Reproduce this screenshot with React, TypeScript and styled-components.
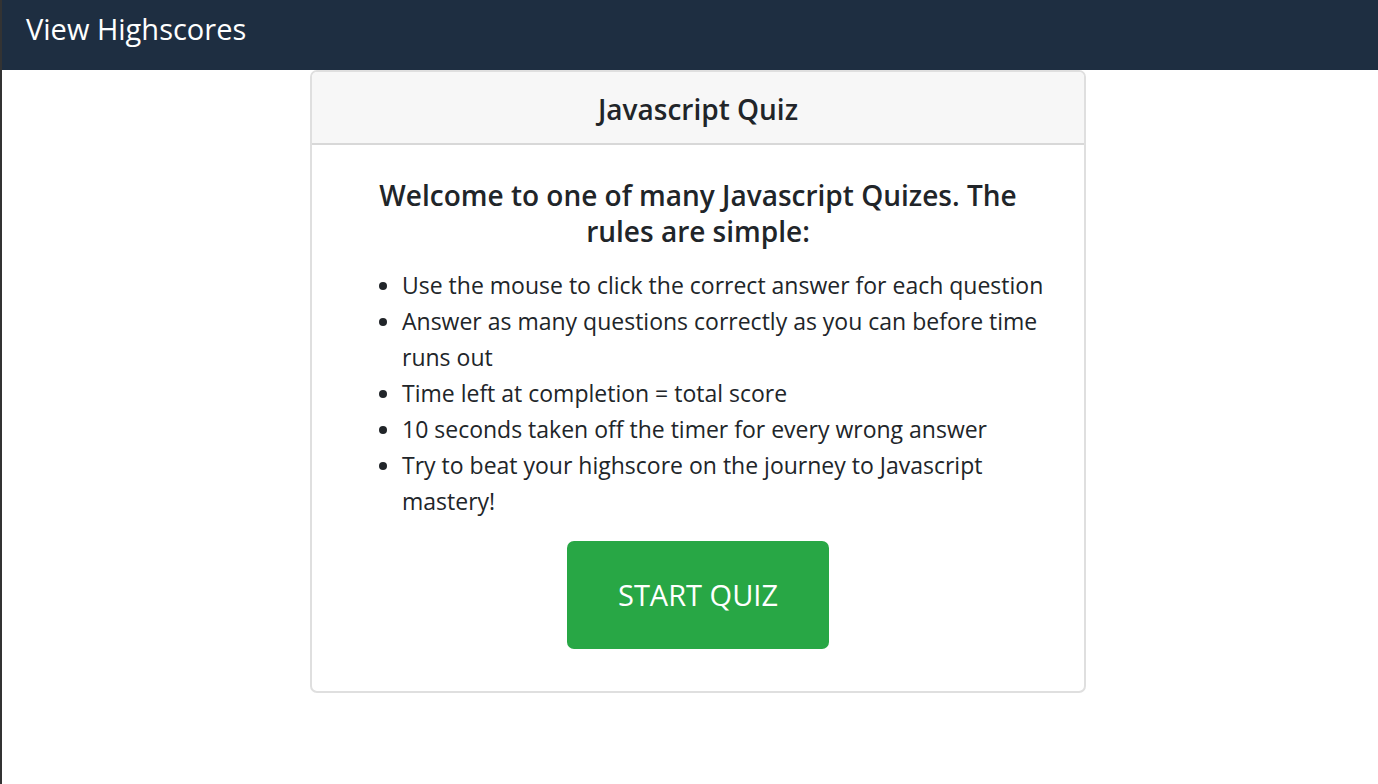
import React from "react";
import styled, { createGlobalStyle } from "styled-components";

const GlobalStyle = createGlobalStyle`
  *, *::before, *::after { box-sizing: border-box; }
  body {
    margin: 0;
    background: #fff;
    color: #212529;
    font-family: "Segoe UI", "Open Sans", "Noto Sans", sans-serif;
    font-size: 23px;
    line-height: 36px;
  }
`;

const Page = styled.div`
  min-height: 100vh;
  border-left: 2px solid #333;
`;

const NavBar = styled.nav`
  display: flex;
  padding: 11px 24px 23px;
  background: #1e2e41;
`;

const NavLink = styled.a`
  color: #fff;
  font-size: 29px;
  text-decoration: none;
`;

const Main = styled.main`
  display: flex;
  justify-content: center;
  padding-left: 16px;
`;

const Card = styled.section`
  width: 100%;
  max-width: 776px;
  border: 2px solid #dfdfdf;
  border-radius: 7px;
  overflow: hidden;
`;

const CardHeader = styled.header`
  padding: 19px 40px 16px;
  border-bottom: 2px solid #d8d8d8;
  background: #f7f7f7;
`;

const Title = styled.h1`
  margin: 0;
  font-size: 28px;
  font-weight: 600;
  line-height: 36px;
  text-align: center;
`;

const CardBody = styled.div`
  display: flex;
  flex-direction: column;
  align-items: center;
  padding: 32px 40px 42px;
`;

const Intro = styled(Title).attrs({ as: "h2" })`
  margin-bottom: 18px;
`;

const Rules = styled.ul`
  align-self: stretch;
  margin: 0 0 22px;
  padding-left: 50px;
`;

const StartButton = styled.button`
  padding: 36px 51px;
  border: 0;
  border-radius: 7px;
  background: #28a745;
  color: #fff;
  font-family: inherit;
  font-size: 29px;
  line-height: 36px;
  cursor: pointer;
`;

const rules = [
  "Use the mouse to click the correct answer for each question",
  "Answer as many questions correctly as you can before time runs out",
  "Time left at completion = total score",
  "10 seconds taken off the timer for every wrong answer",
  "Try to beat your highscore on the journey to Javascript mastery!",
];

export default function App() {
  return (
    <>
      <GlobalStyle />
      <Page>
        <NavBar>
          <NavLink href="#highscores">View Highscores</NavLink>
        </NavBar>
        <Main>
          <Card>
            <CardHeader>
              <Title>Javascript Quiz</Title>
            </CardHeader>
            <CardBody>
              <Intro>
                Welcome to one of many Javascript Quizes. The rules are simple:
              </Intro>
              <Rules>
                {rules.map((rule) => (
                  <li key={rule}>{rule}</li>
                ))}
              </Rules>
              <StartButton type="button">START QUIZ</StartButton>
            </CardBody>
          </Card>
        </Main>
      </Page>
    </>
  );
}
